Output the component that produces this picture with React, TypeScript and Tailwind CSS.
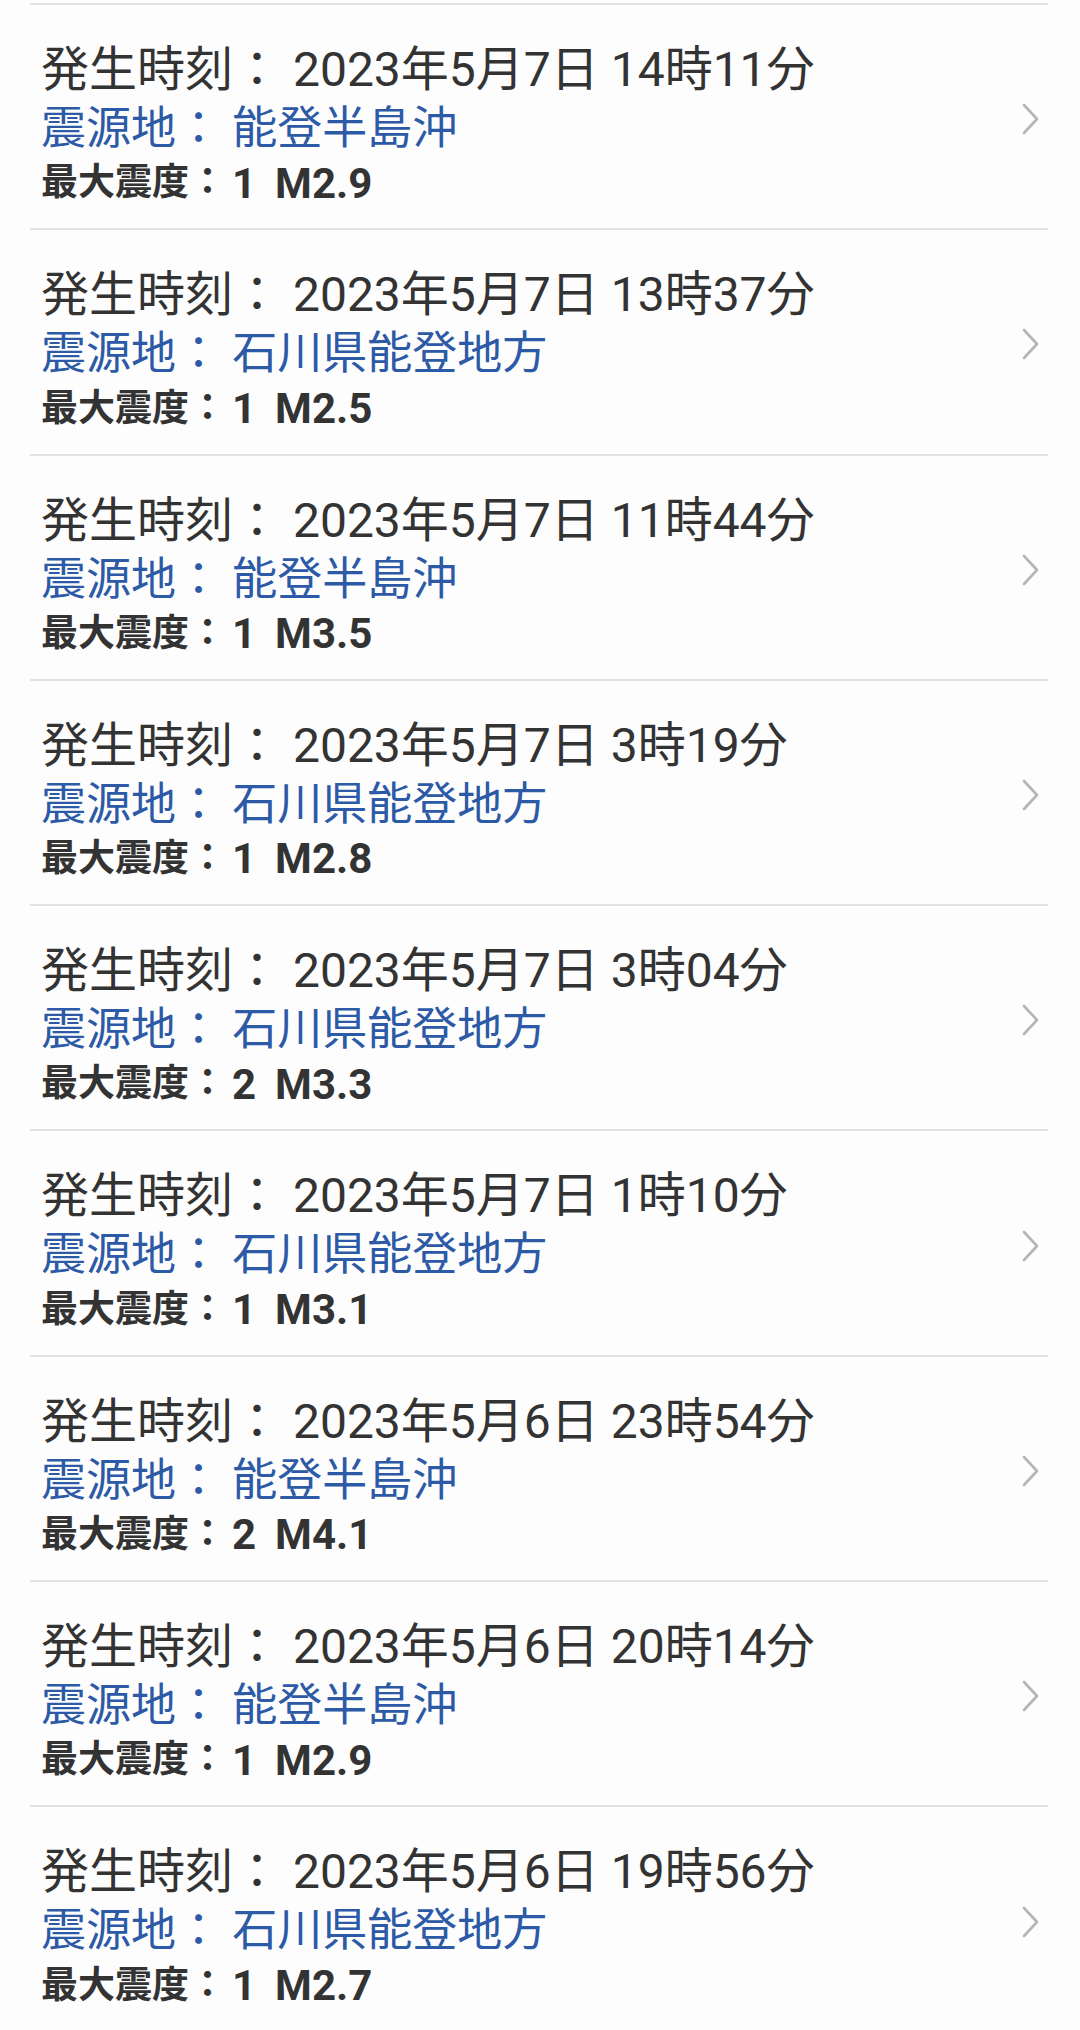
import React from "react";

type Quake = { time: string; place: string; shindo: string; mag: string };

const data: Quake[] = [
  { time: "2023年5月7日 14時11分", place: "能登半島沖", shindo: "1", mag: "M2.9" },
  { time: "2023年5月7日 13時37分", place: "石川県能登地方", shindo: "1", mag: "M2.5" },
  { time: "2023年5月7日 11時44分", place: "能登半島沖", shindo: "1", mag: "M3.5" },
  { time: "2023年5月7日 3時19分", place: "石川県能登地方", shindo: "1", mag: "M2.8" },
  { time: "2023年5月7日 3時04分", place: "石川県能登地方", shindo: "2", mag: "M3.3" },
  { time: "2023年5月7日 1時10分", place: "石川県能登地方", shindo: "1", mag: "M3.1" },
  { time: "2023年5月6日 23時54分", place: "能登半島沖", shindo: "2", mag: "M4.1" },
  { time: "2023年5月6日 20時14分", place: "能登半島沖", shindo: "1", mag: "M2.9" },
  { time: "2023年5月6日 19時56分", place: "石川県能登地方", shindo: "1", mag: "M2.7" },
];

function Chevron() {
  return (
    <svg width="18" height="32" viewBox="0 0 18 32" fill="none">
      <path d="M2 2 L15 16 L2 30" stroke="#b5b5b5" strokeWidth="2.6" strokeLinecap="round" strokeLinejoin="round" />
    </svg>
  );
}

export default function App() {
  return (
    <div
      className="w-[1080px] h-[2030px] overflow-hidden bg-[#fdfdfd] pt-[3px] pl-[30px] pr-[32px]"
      style={{ fontFamily: "Roboto, 'Noto Sans CJK JP', sans-serif" }}
    >
      {data.map((q, i) => (
        <div
          key={i}
          className="h-[225.3px] border-t-2 border-[#e2e2e2] flex items-start justify-between pl-[11px] pr-[8px]"
        >
          <div className="flex flex-col pt-[36px]">
            <div className="text-[48px] leading-[58px] text-[#333333] whitespace-nowrap">
              発生時刻： {q.time}
            </div>
            <div className="text-[45px] leading-[60px] text-[#2c5aa6] whitespace-nowrap">
              震源地： {q.place}
            </div>
            <div className="h-[48px] flex items-center font-bold text-[#333333] whitespace-nowrap">
              <span className="text-[37px]">最大震度：</span>
              <span className="text-[42px] ml-[6px]">{q.shindo}</span>
              <span className="text-[42px] ml-[19px]">{q.mag}</span>
            </div>
          </div>
          <div className="self-center mt-[5px]">
            <Chevron />
          </div>
        </div>
      ))}
    </div>
  );
}
